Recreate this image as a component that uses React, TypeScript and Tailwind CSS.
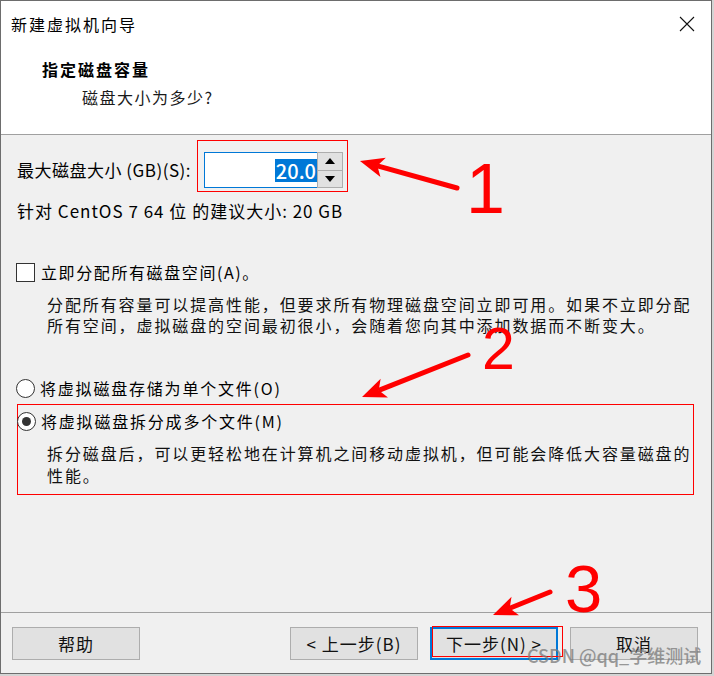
import React from "react";

type Pt = [number, number];

// red annotation arrow: shaft from tail to the base of a filled head at tip
const Arrow = ({ tip, tail }: { tip: Pt; tail: Pt }) => {
  const dx = tip[0] - tail[0];
  const dy = tip[1] - tail[1];
  const len = Math.hypot(dx, dy);
  const ux = dx / len;
  const uy = dy / len;
  const L = 24;
  const W = 10;
  const bx = tip[0] - ux * L;
  const by = tip[1] - uy * L;
  const px = -uy;
  const py = ux;
  const pts = [
    [tip[0], tip[1]],
    [bx + px * W, by + py * W],
    [bx + ux * 6, by + uy * 6],
    [bx - px * W, by - py * W],
  ]
    .map((p) => p.join(","))
    .join(" ");
  return (
    <g>
      <line
        x1={tail[0]}
        y1={tail[1]}
        x2={bx + ux * 4}
        y2={by + uy * 4}
        stroke="#ff0000"
        strokeWidth={5}
        strokeLinecap="round"
      />
      <polygon points={pts} fill="#ff0000" />
    </g>
  );
};

const Radio = ({ checked }: { checked?: boolean }) => (
  <span className="flex h-[19px] w-[19px] shrink-0 items-center justify-center rounded-full border border-[#333333] bg-white">
    {checked && <span className="h-[9px] w-[9px] rounded-full bg-[#333333]" />}
  </span>
);

const Button = ({ label, primary }: { label: string; primary?: boolean }) => (
  <div
    className={
      primary
        ? "flex h-[33px] w-[128px] items-center justify-center border-2 border-[#0078d7] bg-[#e1e1e1] text-[17px] tracking-[1px] text-[#111]"
        : "flex h-[33px] w-[128px] items-center justify-center border border-[#adadad] bg-[#e1e1e1] text-[17px] tracking-[1px] text-[#111]"
    }
  >
    {label}
  </div>
);

export default function App() {
  return (
    <div className="relative h-[676px] w-[714px] overflow-hidden bg-[#d4d4d4] font-['Noto_Sans_CJK_SC',sans-serif] text-black">
      <div className="flex h-[674px] w-[712px] flex-col border border-[#6d6d6d] bg-[#f0f0f0]">
        {/* header */}
        <div className="h-[134px] border-b border-[#a0a0a0] bg-white">
          <div className="flex h-[46px] items-center justify-between pl-[10px] pr-[16px]">
            <span className="text-[16px] leading-[24px] tracking-[2px]">新建虚拟机向导</span>
            <svg width="16" height="16" viewBox="0 0 16 16">
              <path d="M1 1 L15 15 M15 1 L1 15" stroke="#111" strokeWidth="1.1" />
            </svg>
          </div>
          <div className="mt-[10px] pl-[41px] text-[16px] font-bold leading-[24px] tracking-[2px]">
            指定磁盘容量
          </div>
          <div className="mt-[4px] pl-[81px] text-[16px] leading-[24px] tracking-[1.5px] text-[#1a1a1a]">
            磁盘大小为多少?
          </div>
        </div>

        {/* body */}
        <div className="h-[478px] border-b border-[#a0a0a0] pt-[5px]">
          <div className="flex items-start pl-[16px]">
            <span className="mt-[18px] w-[180px] whitespace-nowrap text-[17px] leading-[24px] tracking-[0.5px]">
              最大磁盘大小 (GB)(S):
            </span>
            <div className="flex border border-[#ff0000] pb-[3px] pl-[6px] pr-[4px] pt-[11px]">
              <div className="flex h-[36px] w-[113px] items-center justify-end border border-r-0 border-[#0078d7] bg-white">
                <span className="bg-[#0078d7] px-[1px] text-[20px] font-medium leading-[23px] text-white">20.0</span>
              </div>
              <div className="flex h-[36px] w-[26px] flex-col border border-[#adadad] bg-[#e8e8e8]">
                <div className="flex flex-1 items-center justify-center border-b border-[#adadad] bg-[#e1e1e1]">
                  <svg width="10" height="6" viewBox="0 0 10 6">
                    <path d="M5 0 L10 6 L0 6 Z" fill="#000" />
                  </svg>
                </div>
                <div className="flex flex-1 items-center justify-center bg-[#e1e1e1]">
                  <svg width="10" height="6" viewBox="0 0 10 6">
                    <path d="M0 0 L10 0 L5 6 Z" fill="#000" />
                  </svg>
                </div>
              </div>
            </div>
          </div>

          <div className="mt-[7px] whitespace-nowrap pl-[16px] text-[17px] leading-[24px] tracking-[1px]">
            针对 CentOS 7 64 位 的建议大小: 20 GB
          </div>

          <div className="mt-[39px] flex items-center gap-[6px] pl-[15px]">
            <span className="h-[19px] w-[19px] shrink-0 border border-[#333333] bg-white" />
            <span className="text-[16px] leading-[20px] tracking-[1.6px]">立即分配所有磁盘空间(A)。</span>
          </div>
          <div className="mt-[12px] whitespace-nowrap pl-[46px] text-[16px] leading-[21px] tracking-[1.9px] text-[#111]">
            <div>分配所有容量可以提高性能，但要求所有物理磁盘空间立即可用。如果不立即分配</div>
            <div>所有空间，虚拟磁盘的空间最初很小，会随着您向其中添加数据而不断变大。</div>
          </div>

          <div className="mt-[42px] flex items-center gap-[5px] pl-[15px]">
            <Radio />
            <span className="text-[16px] leading-[20px] tracking-[1.8px]">将虚拟磁盘存储为单个文件(O)</span>
          </div>

          <div className="ml-[16px] mt-[6px] w-[677px] border border-[#ff0000] pb-[8px] pt-[6px]">
            <div className="-ml-[1px] flex items-center gap-[5px]">
              <Radio checked />
              <span className="text-[16px] leading-[20px] tracking-[1.8px]">将虚拟磁盘拆分成多个文件(M)</span>
            </div>
            <div className="mt-[11px] whitespace-nowrap pl-[29px] text-[16px] leading-[22px] tracking-[1.9px] text-[#111]">
              <div>拆分磁盘后，可以更轻松地在计算机之间移动虚拟机，但可能会降低大容量磁盘的</div>
              <div>性能。</div>
            </div>
          </div>
        </div>

        {/* footer */}
        <div className="flex flex-1 items-start justify-between pl-[11px] pr-[13px] pt-[14px]">
          <Button label="帮助" />
          <div className="flex gap-[12px]">
            <Button label="< 上一步(B)" />
            <Button label="下一步(N) >" primary />
            <Button label="取消" />
          </div>
        </div>
      </div>

      {/* annotations */}
      <svg
        className="pointer-events-none absolute left-0 top-0"
        width="714"
        height="676"
        viewBox="0 0 714 676"
      >
        <Arrow tip={[360, 161]} tail={[457, 188]} />
        <text x="466" y="213" fill="#ff0000" fontSize="70" fontFamily="Liberation Sans, sans-serif">
          1
        </text>
        <Arrow tip={[362, 397]} tail={[468, 355]} />
        <text x="482" y="369" fill="#ff0000" fontSize="59" fontFamily="Liberation Sans, sans-serif">
          2
        </text>
        <Arrow tip={[493, 615]} tail={[550, 592]} />
        <text x="565" y="612" fill="#ff0000" fontSize="67" fontFamily="Liberation Sans, sans-serif">
          3
        </text>
        <rect x="432.5" y="626.5" width="130" height="30" fill="none" stroke="#ff0000" strokeWidth="1" />
      </svg>

      <div className="pointer-events-none absolute left-[527px] top-[644px] whitespace-nowrap text-[18px] font-medium leading-[22px] text-[#7a7a7a] opacity-75">
        CSDN @qq_学维测试
      </div>
    </div>
  );
}
